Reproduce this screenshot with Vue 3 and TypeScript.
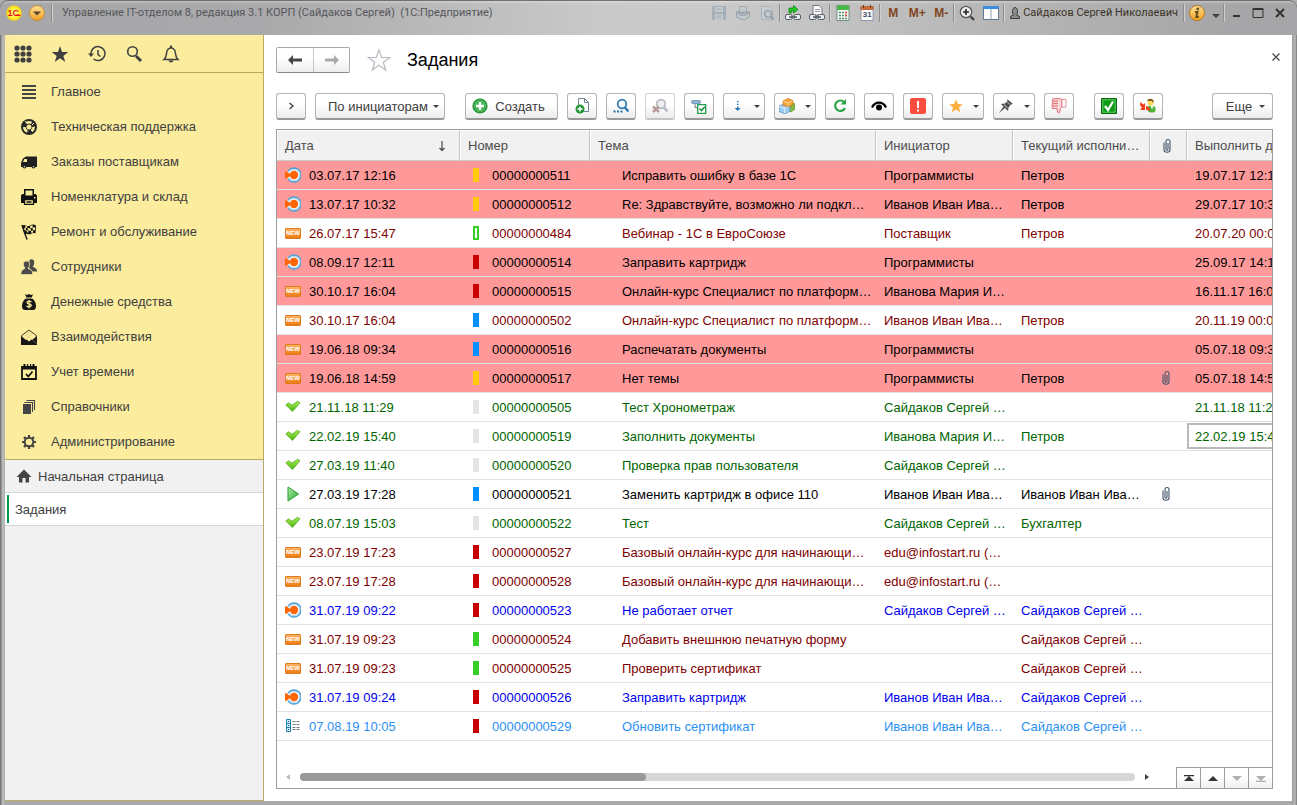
<script setup lang="ts">
interface MenuItem { icon: string; label: string }
interface Task {
  state: 'target' | 'new' | 'done' | 'play' | 'plan'
  date: string
  mark: 'yellow' | 'red' | 'blue' | 'gray' | 'green' | 'hollow'
  num: string
  topic: string
  author: string
  worker: string
  clip?: boolean
  due: string
  tone: 'black' | 'maroon' | 'green' | 'blue' | 'sky'
  overdue?: boolean
  selected?: boolean
}
interface Tool { icon: string; title: string; menu?: boolean; off?: boolean; text?: string }

const menu: MenuItem[] = [
  { icon: 'lines', label: 'Главное' },
  { icon: 'ball', label: 'Техническая поддержка' },
  { icon: 'truck', label: 'Заказы поставщикам' },
  { icon: 'printer', label: 'Номенклатура и склад' },
  { icon: 'flag', label: 'Ремонт и обслуживание' },
  { icon: 'people', label: 'Сотрудники' },
  { icon: 'money', label: 'Денежные средства' },
  { icon: 'mail', label: 'Взаимодействия' },
  { icon: 'calendar', label: 'Учет времени' },
  { icon: 'books', label: 'Справочники' },
  { icon: 'gear', label: 'Администрирование' },
]

const quick: Tool[] = [
  { icon: 'grid', title: 'Все функции' },
  { icon: 'star', title: 'Избранное' },
  { icon: 'history', title: 'История' },
  { icon: 'search', title: 'Поиск' },
  { icon: 'bell', title: 'Оповещения' },
]

const systemTools: Tool[][] = [
  [{ icon: 'floppy', title: 'Сохранить', off: true }, { icon: 'sysprint', title: 'Печать', off: true }, { icon: 'preview', title: 'Просмотр', off: true }],
  [{ icon: 'linkgo', title: 'Перейти по ссылке' }, { icon: 'linkdoc', title: 'Получить ссылку' }],
  [{ icon: 'calc', title: 'Калькулятор' }, { icon: 'cal31', title: 'Календарь', text: '31' }],
]

const tools: Tool[] = [
  { icon: 'copy', title: 'Скопировать' },
  { icon: 'find', title: 'Найти' },
  { icon: 'unfind', title: 'Отменить поиск', off: true },
  { icon: 'mode', title: 'Режим просмотра' },
  { icon: 'down', title: 'Порядок', menu: true },
  { icon: 'cubes', title: 'Создать на основании', menu: true },
  { icon: 'refresh', title: 'Обновить' },
  { icon: 'eye', title: 'Наблюдение' },
  { icon: 'alert', title: 'Важность' },
  { icon: 'goldstar', title: 'Оценка', menu: true },
  { icon: 'pin', title: 'Закрепить', menu: true },
  { icon: 'dislike', title: 'Отклонить' },
]

const actions: Tool[] = [
  { icon: 'check', title: 'Выполнить' },
  { icon: 'assign', title: 'Перенаправить' },
]

const pager: Tool[] = [
  { icon: 'first', title: 'В начало' },
  { icon: 'up', title: 'Вверх' },
  { icon: 'next', title: 'Вниз', off: true },
  { icon: 'last', title: 'В конец', off: true },
]

const tasks: Task[] = [
  { state: 'target', date: '03.07.17 12:16', mark: 'yellow', num: '00000000511', topic: 'Исправить ошибку в базе 1С', author: 'Программисты', worker: 'Петров', due: '19.07.17 12:16', tone: 'black', overdue: true },
  { state: 'target', date: '13.07.17 10:32', mark: 'yellow', num: '00000000512', topic: 'Re: Здравствуйте, возможно ли подкл…', author: 'Иванов Иван Ива…', worker: 'Петров', due: '29.07.17 10:32', tone: 'black', overdue: true },
  { state: 'new', date: '26.07.17 15:47', mark: 'hollow', num: '00000000484', topic: 'Вебинар - 1С в ЕвроСоюзе', author: 'Поставщик', worker: 'Петров', due: '20.07.20 00:00', tone: 'maroon' },
  { state: 'target', date: '08.09.17 12:11', mark: 'red', num: '00000000514', topic: 'Заправить картридж', author: 'Программисты', worker: '', due: '25.09.17 14:11', tone: 'black', overdue: true },
  { state: 'new', date: '30.10.17 16:04', mark: 'red', num: '00000000515', topic: 'Онлайн-курс Специалист по платформ…', author: 'Иванова Мария И…', worker: '', due: '16.11.17 16:04', tone: 'black', overdue: true },
  { state: 'new', date: '30.10.17 16:04', mark: 'blue', num: '00000000502', topic: 'Онлайн-курс Специалист по платформ…', author: 'Иванов Иван Ива…', worker: 'Петров', due: '20.11.19 00:00', tone: 'maroon' },
  { state: 'new', date: '19.06.18 09:34', mark: 'blue', num: '00000000516', topic: 'Распечатать документы', author: 'Программисты', worker: '', due: '05.07.18 09:34', tone: 'black', overdue: true },
  { state: 'new', date: '19.06.18 14:59', mark: 'yellow', num: '00000000517', topic: 'Нет темы', author: 'Программисты', worker: 'Петров', clip: true, due: '05.07.18 14:59', tone: 'black', overdue: true },
  { state: 'done', date: '21.11.18 11:29', mark: 'gray', num: '00000000505', topic: 'Тест Хронометраж', author: 'Сайдаков Сергей …', worker: '', due: '21.11.18 11:29', tone: 'green' },
  { state: 'done', date: '22.02.19 15:40', mark: 'gray', num: '00000000519', topic: 'Заполнить документы', author: 'Иванова Мария И…', worker: 'Петров', due: '22.02.19 15:40', tone: 'green', selected: true },
  { state: 'done', date: '27.03.19 11:40', mark: 'gray', num: '00000000520', topic: 'Проверка прав пользователя', author: 'Сайдаков Сергей …', worker: '', due: '', tone: 'green' },
  { state: 'play', date: '27.03.19 17:28', mark: 'blue', num: '00000000521', topic: 'Заменить картридж в офисе 110', author: 'Иванов Иван Ива…', worker: 'Иванов Иван Ива…', clip: true, due: '', tone: 'black' },
  { state: 'done', date: '08.07.19 15:03', mark: 'gray', num: '00000000522', topic: 'Тест', author: 'Сайдаков Сергей …', worker: 'Бухгалтер', due: '', tone: 'green' },
  { state: 'new', date: '23.07.19 17:23', mark: 'red', num: '00000000527', topic: 'Базовый онлайн-курс для начинающи…', author: 'edu@infostart.ru (…', worker: '', due: '', tone: 'maroon' },
  { state: 'new', date: '23.07.19 17:28', mark: 'red', num: '00000000528', topic: 'Базовый онлайн-курс для начинающи…', author: 'edu@infostart.ru (…', worker: '', due: '', tone: 'maroon' },
  { state: 'target', date: '31.07.19 09:22', mark: 'red', num: '00000000523', topic: 'Не работает отчет', author: 'Сайдаков Сергей …', worker: 'Сайдаков Сергей …', due: '', tone: 'blue' },
  { state: 'new', date: '31.07.19 09:23', mark: 'green', num: '00000000524', topic: 'Добавить внешнюю печатную форму', author: '', worker: 'Сайдаков Сергей …', due: '', tone: 'maroon' },
  { state: 'new', date: '31.07.19 09:23', mark: 'green', num: '00000000525', topic: 'Проверить сертификат', author: '', worker: 'Сайдаков Сергей …', due: '', tone: 'maroon' },
  { state: 'target', date: '31.07.19 09:24', mark: 'red', num: '00000000526', topic: 'Заправить картридж', author: 'Иванов Иван Ива…', worker: 'Сайдаков Сергей …', due: '', tone: 'blue' },
  { state: 'plan', date: '07.08.19 10:05', mark: 'red', num: '00000000529', topic: 'Обновить сертификат', author: 'Иванов Иван Ива…', worker: 'Сайдаков Сергей …', due: '', tone: 'sky' },
]
</script>

<template>
  <svg class="sprite" aria-hidden="true">
    <defs>
      <linearGradient id="g-green" x1="0" y1="0" x2="0" y2="1"><stop offset="0" stop-color="#a4ee4c" /><stop offset="1" stop-color="#4cb414" /></linearGradient>
      <linearGradient id="g-play" x1="0" y1="0" x2="1" y2="1"><stop offset="0" stop-color="#b8eeaa" /><stop offset="1" stop-color="#1fa32a" /></linearGradient>
      <radialGradient id="g-logo"><stop offset="0" stop-color="#fff9a0" /><stop offset="0.7" stop-color="#fff02c" /><stop offset="1" stop-color="#f2c81c" /></radialGradient>
      <linearGradient id="g-gold" x1="0" y1="0" x2="0" y2="1"><stop offset="0" stop-color="#ffe29a" /><stop offset="1" stop-color="#f0a020" /></linearGradient>
    </defs>
    <symbol id="grid" viewBox="0 0 18 18"><g fill="#404040"><circle cx="3" cy="3" r="2.6" /><circle cx="9" cy="3" r="2.6" /><circle cx="15" cy="3" r="2.6" /><circle cx="3" cy="9" r="2.6" /><circle cx="9" cy="9" r="2.6" /><circle cx="15" cy="9" r="2.6" /><circle cx="3" cy="15" r="2.6" /><circle cx="9" cy="15" r="2.6" /><circle cx="15" cy="15" r="2.6" /></g></symbol>
    <symbol id="star" viewBox="0 0 18 18"><path fill="#404040" d="M9 1l2 6h6.300l-5 3.900 2 6.200L9 13.300 3.700 17.100l2-6.200L.7 7H7z" /></symbol>
    <symbol id="history" viewBox="0 0 18 18"><path fill="none" stroke="#404040" stroke-width="1.500" d="M3 9.500A7 7 0 1 1 5.500 14M10 5v4.500l2.500 2" /><path fill="#404040" d="M0 8.500h6L3 12z" /></symbol>
    <symbol id="search" viewBox="0 0 18 18"><circle cx="7.500" cy="6.500" r="4.800" fill="none" stroke="#404040" stroke-width="1.600" /><path stroke="#404040" stroke-width="3" d="M11 11l5 5" /></symbol>
    <symbol id="bell" viewBox="0 0 18 18"><path fill="none" stroke="#404040" stroke-width="1.500" d="M2 14.500c3-2.500 2-6 3.200-9C6 3.500 7.500 3 9 2.500c1.500.5 3 1 3.800 3 1.200 3 .2 6.500 3.200 9z" /><path fill="#404040" d="M8 .5h2v3H8zM6.500 15.500h5c-.5 2.500-4.500 2.500-5 0z" /></symbol>
    <symbol id="lines" viewBox="0 0 16 16"><path stroke="#444" stroke-width="2" d="M1 2h14M1 6h14M1 10h14M1 14h14" /></symbol>
    <symbol id="ball" viewBox="0 0 16 16"><circle cx="8" cy="8" r="8" fill="#282828" /><circle cx="8" cy="8" r="4.700" fill="none" stroke="#f8eb9b" stroke-width="2.600" stroke-dasharray="5.500 4.345" stroke-dashoffset="1" /><circle cx="8" cy="8" r="2.500" fill="#f8eb9b" /><path stroke="#f8eb9b" d="M4 2l2 2M13 4l-2 2M3 12l2-2M12 13l-2-2" /></symbol>
    <symbol id="truck" viewBox="0 0 16 16"><path fill="#202020" d="M5 2.500h11V13H0V9L2 4.500z" /><path fill="#f8eb9b" d="M3.300 5H6v3H2z" /><circle cx="3.500" cy="12.500" r="2" fill="#202020" /><circle cx="12.500" cy="12.500" r="2" fill="#202020" /><circle cx="3.500" cy="12.800" r=".8" fill="#ccc" /><circle cx="12.500" cy="12.800" r=".8" fill="#ccc" /></symbol>
    <symbol id="printer" viewBox="0 0 16 16"><path fill="#111" d="M3 0h10v5h1.500L16 6.500V14H0V6.500L1.500 5H3z" /><path fill="#f8eb9b" d="M4.500 1.500h7v5h-7zM3 11h10v4H3z" /><path fill="none" stroke="#111" stroke-width="1.300" d="M3.500 10.500h9v5h-9zM5.500 13h5" /><path fill="#f8eb9b" d="M13 8h1.500v1.500H13z" /></symbol>
    <symbol id="flag" viewBox="0 0 16 16"><path stroke="#222" stroke-width="1.500" d="M1 1l5 14.500" /><path fill="#141414" d="M1 1.500c4-2 5 2 8 0 2-1.500 4-1.200 6 0l-.5 8c-4-1.800-5 2-8 .5-1.500-.5-2.500 0-3 .5z" /><path fill="#f8eb9b" d="M4 1.500l2 .5.500 2-2-.3zM9 2l2.500-1 .2 2.500L9.500 4.500zM6.500 4l3 .5L10 7 7 6.500zM11.500 3.500l2.500-.3V6l-2 .3zM3 4l1.500-.3.7 2.500-1.500.3zM5.200 6.200L7 6.500l.5 2L6 8.300zM10 7l2-.7.2 2.200-1.700.5z" /></symbol>
    <symbol id="people" viewBox="0 0 16 16"><g fill="#4b4b4b"><path d="M8.500 1c2-1.500 5-.5 4.700 2.500 0 2-.5 3-1.500 4 .5 1 4.300 1.500 4.300 4v1h-4.500L8 8.500z" /><path stroke="#f8eb9b" stroke-width=".7" d="M5.500 2c2.500 0 3.500 1.500 3 4.200-.2 1.300-.8 2-1.300 2.800.3 1.800 4.300 1.200 4.300 5 0 1-.5 1.500-1 1.500H.5C0 15.500-.2 14.500 0 14c0-3.500 3.700-3.500 4-5-.7-.8-1.300-1.600-1.500-2.800C2 3.500 3 2 5.500 2z" /></g></symbol>
    <symbol id="money" viewBox="0 0 16 16"><path fill="#181818" d="M4 0l2 1 2-1 2 1 2-.5L10.500 4c3 1.500 4.500 5 4.500 8 0 2.500-1 4-3 4H4c-2 0-3-1.500-3-4 0-3 1.500-6.500 4.500-8z" /><path stroke="#f8eb9b" d="M5 4h6" /><path fill="none" stroke="#f8eb9b" stroke-width="1.300" d="M10.500 8C8.500 6.500 6 7 6 8.500c0 2 4.300 1 4.300 3 0 1.500-2.800 1.800-4.800.5M8 6v8.500" /></symbol>
    <symbol id="mail" viewBox="0 0 16 16"><path fill="none" stroke="#3a3a2a" d="M.7 6.500L8 1l7.300 5.500v8H.7z" /><path fill="#181818" d="M0 7l5 4-5 4zM16 7l-5 4 5 4zM0 16v-1.500l5.500-4L8 12.500l2.500-2 5.500 4V16z" /><path fill="none" stroke="#c9bd7c" stroke-width=".7" d="M4 7l5-4M6 9l5-4" /></symbol>
    <symbol id="calendar" viewBox="0 0 16 16"><path fill="none" stroke="#111" stroke-width="1.800" d="M1 3h14v12H1z" /><path fill="#111" d="M1 2h14v3.500H1zM2.500 0h2v3h-2zM11.500 0h2v3h-2zM6 0h1.200v3H6zM9 0h1.200v3H9z" /><path fill="none" stroke="#111" stroke-width="1.800" d="M5 10l2.300 2.500L11.500 7.500" /></symbol>
    <symbol id="books" viewBox="0 0 16 16"><path fill="#444" d="M2 5h8v10H2z" /><path fill="none" stroke="#444" stroke-width="1.100" d="M3.500 3.500h8V13M5.500 1.500h8V11" /></symbol>
    <symbol id="gear" viewBox="0 0 16 16"><g fill="none" stroke="#444"><circle cx="8" cy="8" r="4.300" stroke-width="2" /><path stroke-width="2.200" d="M8 1v2.500M8 12.500V15M1 8h2.500M12.500 8H15M3 3l1.900 1.900M11.100 11.100L13 13M13 3l-1.900 1.900M3 13l1.900-1.900" /></g></symbol>
    <symbol id="home" viewBox="0 0 16 16"><path fill="#444" d="M8 1.500L15.500 9H13v5.500H9.500V10h-3v4.500H3V9H.5z" /></symbol>

    <symbol id="floppy" viewBox="0 0 16 16"><path fill="#8fa0ad" d="M1 1h14v14H1z" /><path fill="#c3cbd0" d="M4 2h8v5H4zM4 9h8v6H4z" /><path stroke="#8fa0ad" d="M5 4h6M5 11h6M5 13h6" /></symbol>
    <symbol id="sysprint" viewBox="0 0 16 16"><path fill="#c3cbd0" stroke="#8794a0" d="M4.500 1.500h7v5h3v6h-3v2h-7v-2h-3v-6h3zM4.500 10.500h7" /><path fill="#8794a0" d="M2 6.500h12v3H2z" /></symbol>
    <symbol id="preview" viewBox="0 0 16 16"><path fill="#cdd4d8" stroke="#98a6b0" d="M2.500 1.500h8l3 3v10h-11z" /><circle cx="9" cy="9" r="3.300" fill="#c3cdd4" stroke="#70889a" stroke-width="1.300" /><path stroke="#70889a" stroke-width="2" d="M11.500 11.500l3 3" /></symbol>
    <symbol id="linkgo" viewBox="0 0 16 16"><g fill="#eee" stroke="#555e68"><rect x=".5" y="9.500" width="6.500" height="5" rx="1.500" /><rect x="9" y="9.500" width="6.500" height="5" rx="1.500" /><path d="M4 12h8" stroke-width="1.600" /></g><path fill="#22cc22" stroke="#0d7d12" stroke-width=".8" d="M4 3h4.500V.5L13 4.500 8.500 8V5.800H6.300V8H4z" /></symbol>
    <symbol id="linkdoc" viewBox="0 0 16 16"><path fill="#fafafa" stroke="#778" d="M4 .5h6l3 3V10H4z" /><path stroke="#99a" d="M6 4.500h5M6 6.500h5" /><g fill="#eee" stroke="#555e68"><rect x=".5" y="9.500" width="6.500" height="5" rx="1.500" /><rect x="9" y="9.500" width="6.500" height="5" rx="1.500" /><path d="M4 12h8" stroke-width="1.600" /></g></symbol>
    <symbol id="calc" viewBox="0 0 16 16"><path fill="#f4f7f4" stroke="#5b7b66" stroke-width=".8" d="M2 .5h12v15H2z" /><path fill="#46b948" d="M2 .5h12V5H2z" /><path stroke="#50906a" stroke-width="1.500" stroke-dasharray="2 1" d="M4 7.500h8M4 10.500h8M4 13.500h8" /><path stroke="#d43" stroke-width="1.500" d="M10 7.500h2M10 10.500h2" /></symbol>
    <symbol id="cal31" viewBox="0 0 16 16"><path fill="#fff" stroke="#7a89a0" stroke-width=".8" d="M2 1.500h12v14H2z" /><path fill="#c56c3c" d="M1.500 1h13v4h-13z" /><path stroke="#6d3c22" d="M4.500 0v3M11.500 0v3" /></symbol>
    <symbol id="zoomin" viewBox="0 0 16 16"><circle cx="7" cy="7" r="5.700" fill="#ececec" stroke="#555" stroke-width="1.200" /><path stroke="#222" stroke-width="1.600" d="M4 7h6M7 4v6" /><path stroke="#444" stroke-width="2.400" d="M11.500 11.500L15 15" /></symbol>
    <symbol id="panels" viewBox="0 0 16 16"><path fill="#fff" stroke="#60788c" d="M.5 1.500h15v13H.5z" /><path fill="#3b8fe0" d="M0 1h16v3H0z" /><path stroke="#8ba2b4" d="M8 4v10.500" /></symbol>
    <symbol id="user" viewBox="0 0 10 12"><path fill="#8a8a8a" stroke="#3c3c3c" d="M.5 11.500V9.500L3.500 8C2 6.500 2 .5 5 .5S8 6.500 6.500 8l3 1.500v2z" /></symbol>
    <symbol id="info" viewBox="0 0 16 16"><circle cx="8" cy="8" r="7.500" fill="url(#g-gold)" stroke="#b97a1c" /><circle cx="8.800" cy="4" r="1.400" fill="#644c1c" /><path fill="none" stroke="#644c1c" stroke-width="2" d="M6 7h2.500L7.300 12h2.500" /></symbol>

    <symbol id="target" viewBox="0 0 16 16"><circle cx="9" cy="8" r="7" fill="#eaf4fb" stroke="#4a9fd4" stroke-width="1.300" /><circle cx="9" cy="8" r="5.500" fill="#fff" stroke="#7fc0e6" stroke-width=".6" /><path fill="#fff" d="M1 4.500h3v7H1z" /><circle cx="9" cy="8" r="4.200" fill="#ff6505" /><path fill="#ff6505" d="M0 4.300h1.500L6.500 8l-5 3.700H0z" /></symbol>
    <symbol id="done" viewBox="0 0 16 16"><path fill="url(#g-green)" stroke="#58a92a" stroke-width=".8" d="M.8 6L3.500 3.800 7 6.200l5.500-4L15 3.800 7.500 12.500z" /></symbol>
    <symbol id="play" viewBox="0 0 16 16"><path fill="url(#g-play)" stroke="#279a35" d="M3 1l10.500 7L3 15z" /></symbol>
    <symbol id="plan" viewBox="0 0 16 16"><path fill="#d6eefb" stroke="#1880b4" d="M1.500 1.500h4v12h-4zM1.500 5.500h4M1.500 9.500h4" /><path fill="#174f79" d="M3 3h1v1H3zM3 7h1v1H3zM3 11h1v1H3z" /><path stroke="#6e7a80" stroke-dasharray="3 1" d="M7.500 3.500H15M7.500 6.500H15M7.500 9.500H15M7.500 11.500H15" /></symbol>
    <symbol id="clip" viewBox="0 0 16 16"><path fill="none" stroke="#42546a" stroke-width="1.100" d="M5 4.500v7.500c0 3 6 3 6 0V3.500c0-2.600-4-2.600-4 0V11c0 1.500 2 1.500 2 0V5" /></symbol>

    <symbol id="plus" viewBox="0 0 16 16"><circle cx="8" cy="8" r="7" fill="#45b556" stroke="#238a35" stroke-width="1.200" /><path stroke="#fff" stroke-width="2.400" d="M8 4v8M4 8h8" /></symbol>
    <symbol id="copy" viewBox="0 0 16 16"><path fill="#fdfefe" stroke="#6c8299" d="M4.500.5h6l4 4v9h-10z" /><path fill="none" stroke="#6c8299" d="M10.500.5v4h4" /><circle cx="6" cy="11" r="4.500" fill="#249638" /><path stroke="#fff" stroke-width="1.400" d="M6 8.500v5M3.500 11h5" /></symbol>
    <symbol id="find" viewBox="0 0 16 16"><circle cx="9" cy="6" r="4.300" fill="#f4fafe" stroke="#2f7bac" stroke-width="1.700" /><path stroke="#2f7bac" stroke-width="2.500" d="M12 9.500l3.500 4" /><path stroke="#1f6fa4" stroke-width="2" stroke-dasharray="2 1.500" d="M.5 13.500h9" /></symbol>
    <symbol id="unfind" viewBox="0 0 16 16"><circle cx="9" cy="6" r="4.300" fill="#eee" stroke="#b4bac0" stroke-width="1.700" /><path stroke="#b4bac0" stroke-width="2.500" d="M12 9.500l3.500 4" /><path stroke="#b79a9a" stroke-width="2.400" d="M1 8.500l6 5.500M7 8.500L1 14" /></symbol>
    <symbol id="mode" viewBox="0 0 16 16"><rect x=".5" y="2.500" width="9" height="3" rx="1" fill="#8eb2d8" stroke="#7b9cc0" /><path fill="none" stroke="#6f7b84" d="M4 6v3.500h3" /><path fill="#fff" stroke="#269b4c" stroke-width="1.300" d="M6.700 6.700h8v8.600h-8z" /><path fill="none" stroke="#188a3c" stroke-width="1.500" d="M8.500 10.500l2 2.200 3.300-4" /></symbol>
    <symbol id="down" viewBox="0 0 16 16"><path fill="#2878b4" d="M9 3h1.500v1.200H9zM9 5.800h1.500V7H9zM9 8.500h1.500v1.500h2.200l-3 3-3-3H9z" /></symbol>
    <symbol id="cubes" viewBox="0 0 16 16"><path fill="#83ba43" stroke="#579321" stroke-width=".7" d="M10 7l4-2 2 1v5l-4 3-2-1z" /><path fill="#9dcdf3" stroke="#4b86bb" stroke-width=".7" d="M0 8l5-2 6 2v5l-5 3-6-2.500z" /><path fill="none" stroke="#e8f5ff" stroke-width=".8" d="M0 8.200l5.500 2 5-2M5.500 10.200V15" /><path fill="#f9a43c" stroke="#c87416" stroke-width=".7" d="M4 3l5-2.500L14 2.500v4L9 9 4 7z" /><path fill="none" stroke="#ffe0a0" stroke-width=".8" d="M4.300 3.200L9 5l4.800-2.300M9 5v3.500" /></symbol>
    <symbol id="refresh" viewBox="0 0 16 16"><path fill="none" stroke="#2da445" stroke-width="2.200" d="M12 4A5.200 5.200 0 1 0 13 10" /><path fill="#2da445" d="M8.500 6.500L14 1v5.500z" /></symbol>
    <symbol id="eye" viewBox="0 0 16 16"><path fill="none" stroke="#000" stroke-width="2.200" d="M1 9.500C4 3 12 3 15 9.500" /><circle cx="8" cy="9.500" r="3" /></symbol>
    <symbol id="alert" viewBox="0 0 16 16"><rect width="16" height="16" rx="2" fill="#fc4c40" /><path stroke="#fff" stroke-width="2" d="M8 3v7M8 11.500v2" /></symbol>
    <symbol id="goldstar" viewBox="0 0 16 16"><path fill="#fcae3c" d="M9 1.500l1.900 4.600 4.800.3-3.700 3.100 1.200 4.700L9 11.600l-4.200 2.600L6 9.500 2.300 6.400l4.800-.3z" /></symbol>
    <symbol id="pin" viewBox="0 0 16 16"><path fill="#4c4c4c" d="M9 1l6 5-2 .5-2.500 3L10 13l-3-3L1 15l4.500-6.500L3 6l4-.5 2.500-2.500z" /><path stroke="#999" stroke-width="1.200" d="M9 4l3 2.500M6 6.500L9.500 10" /></symbol>
    <symbol id="dislike" viewBox="0 0 16 16"><path fill="#fcdada" stroke="#dd5c62" stroke-width=".9" d="M2 .7h7.500l1.500 1V9c-1.500.5-2 2-2 4 0 2-1.500 2.700-2.500 1.300L6 10.500H2c-1.500 0-1.500-2 0-2.500-1.500 0-1.500-2 0-2.500-1.500 0-1.300-2 .2-2.300C1 3 1 1 2 .7zM2 3.200h5M2 5.600h5M2 8h5" /><path fill="#fff" stroke="#e0898d" stroke-width=".9" d="M11 1.500h4v7.500h-4z" /></symbol>
    <symbol id="check" viewBox="0 0 16 16"><path fill="#0a9a14" stroke="#07660d" d="M.5.5h15v15H.5z" /><path fill="none" stroke="#7fd684" stroke-width=".8" d="M1.800 1.800h12.400v12.400H1.800z" /><path fill="none" stroke="#fff" stroke-width="2.300" d="M4 8l3 4 5-8.500" /></symbol>
    <symbol id="assign" viewBox="0 0 16 16"><path fill="#4fb436" d="M8 8.500c2-1.500 7-1.500 7.500 2V13c-1 2-6 2-7.500 0z" /><path fill="#fff" d="M10.500 7.500l1.500 4 1.500-4z" /><circle cx="10.500" cy="4.500" r="3" fill="#ffd95a" /><path fill="#7a5a14" d="M7.200 3c.5-3 6-3 6.600.5L13 5l-1-2z" /><path fill="#f33b16" d="M.5 4l3 2.500L5 5v7H0l2-2.500-2-2zM6 7.500l3.500 2.500.5 3-4-1.500z" /></symbol>

    <symbol id="first" viewBox="0 0 16 16"><path fill="#333" d="M3 5h10v1.200H3zM8 6l5 5H3z" /></symbol>
    <symbol id="up" viewBox="0 0 16 16"><path fill="#333" d="M8 6l5 5H3z" /></symbol>
    <symbol id="next" viewBox="0 0 16 16"><path fill="#b0b0b0" d="M8 11l5-5H3z" /></symbol>
    <symbol id="last" viewBox="0 0 16 16"><path fill="#b0b0b0" d="M8 11l5-5H3zM3 10.800h10V12H3z" /></symbol>
  </svg>

  <div class="window">
    <header class="titlebar">
      <svg class="round" viewBox="0 0 16 16"><circle cx="8" cy="8" r="7.800" fill="url(#g-logo)" /><text class="logo-text" x="1.500" y="11">1С</text><path stroke="#e3161c" stroke-width="1.300" d="M9 10.400h5.500" /></svg>
      <button class="round main-menu" aria-label="Главное меню"><svg viewBox="0 0 16 16"><circle cx="8" cy="8" r="7.500" fill="url(#g-gold)" stroke="#c58b3c" /><path fill="#5c4528" d="M4 6.500h8L8 10.500z" /></svg></button>
      <i class="sep"></i>
      <span class="caption">Управление IT-отделом 8, редакция 3.1 КОРП (Сайдаков Сергей)&nbsp; (1С:Предприятие)</span>
      <div class="system">
        <template v-for="(group, g) in systemTools" :key="g">
          <button v-for="t in group" :key="t.icon" class="sys" :class="{ faded: t.off }" :aria-label="t.title"><svg><use :href="'#' + t.icon" /></svg><span v-if="t.text" class="day">{{ t.text }}</span></button>
          <i class="sep"></i>
        </template>
        <button class="sys mem">M</button>
        <button class="sys mem">M+</button>
        <button class="sys mem">M-</button>
        <i class="sep"></i>
        <button class="sys" aria-label="Масштаб"><svg><use href="#zoomin" /></svg></button>
        <button class="sys" aria-label="Панели"><svg><use href="#panels" /></svg></button>
        <i class="sep"></i>
        <button class="account"><svg><use href="#user" /></svg>Сайдаков Сергей Николаевич</button>
        <i class="sep"></i>
        <button class="sys" aria-label="Справка"><svg><use href="#info" /></svg></button>
        <button class="more-arrow" aria-label="Дополнительно"><i class="caret"></i></button>
        <i class="sep"></i>
        <button class="win" aria-label="Свернуть"><svg viewBox="0 0 12 12"><path stroke="#333" stroke-width="2" d="M3 9h7" /></svg></button>
        <button class="win" aria-label="Развернуть"><svg viewBox="0 0 12 12"><path fill="none" stroke="#333" d="M1 1.500h10v9H1zM1 2.500h10" /></svg></button>
        <button class="win" aria-label="Закрыть"><svg viewBox="0 0 12 12"><path stroke="#333" stroke-width="2" d="M2 2l8 8M10 2l-8 8" /></svg></button>
      </div>
    </header>

    <div class="body">
      <aside class="side">
        <div class="sections">
          <div class="quick">
            <button v-for="q in quick" :key="q.icon" :aria-label="q.title"><svg><use :href="'#' + q.icon" /></svg></button>
          </div>
          <nav>
            <a v-for="m in menu" :key="m.icon" href="#"><svg><use :href="'#' + m.icon" /></svg>{{ m.label }}</a>
          </nav>
        </div>
        <a class="open-page" href="#"><svg><use href="#home" /></svg>Начальная страница</a>
        <a class="open-page current" href="#">Задания</a>
      </aside>

      <main class="form">
        <div class="heading">
          <div class="history">
            <button aria-label="Назад"><svg viewBox="0 0 16 12"><path fill="#444" d="M1 6l5-5v3.500h9v3H6V11z" /></svg></button>
            <button aria-label="Вперед"><svg viewBox="0 0 16 12"><path fill="#aaa" d="M15 6l-5-5v3.500H1v3h9V11z" /></svg></button>
          </div>
          <button class="fav" aria-label="В избранное"><svg viewBox="0 0 24 24"><path fill="#fff" stroke="#b4bac0" stroke-width="1.200" d="M12 2l2.700 7.500h8l-6.400 4.800 2.400 7.700-6.700-4.700L5.300 22l2.400-7.700L1.300 9.500h8z" /></svg></button>
          <h1>Задания</h1>
          <button class="close" aria-label="Закрыть форму"><svg viewBox="0 0 10 10"><path stroke="#444" stroke-width="1.200" d="M1.500 1.500l7 7M8.500 1.500l-7 7" /></svg></button>
        </div>

        <div class="toolbar">
          <div class="group">
            <button class="tool" aria-label="Показать дерево"><svg viewBox="0 0 16 16"><path fill="none" stroke="#444" stroke-width="1.400" d="M6.500 5L10 8l-3.500 3" /></svg></button>
            <button class="tool grouping">По инициаторам<i class="caret"></i></button>
          </div>
          <div class="group">
            <button class="tool create"><svg><use href="#plus" /></svg>Создать</button>
            <button v-for="t in tools" :key="t.icon" class="tool" :class="{ split: t.menu, off: t.off }" :aria-label="t.title"><svg><use :href="'#' + t.icon" /></svg><i v-if="t.menu" class="caret"></i></button>
          </div>
          <div class="group">
            <button v-for="t in actions" :key="t.icon" class="tool" :aria-label="t.title"><svg><use :href="'#' + t.icon" /></svg></button>
          </div>
          <button class="tool more">Еще<i class="caret"></i></button>
        </div>

        <div class="list">
          <div class="rows">
            <table>
              <colgroup><col class="c-date"><col class="c-num"><col><col class="c-person"><col class="c-person"><col class="c-clip"><col class="c-due"></colgroup>
              <thead>
                <tr>
                  <th><div class="sorted">Дата<svg viewBox="0 0 8 12"><path fill="none" stroke="#444" stroke-width="1.200" d="M4 1v9M1.500 8L4 10.500 6.500 8" /></svg></div></th>
                  <th>Номер</th>
                  <th>Тема</th>
                  <th>Инициатор</th>
                  <th>Текущий исполни…</th>
                  <th class="clip" aria-label="Вложения"><svg><use href="#clip" /></svg></th>
                  <th>Выполнить до</th>
                </tr>
              </thead>
              <tbody>
                <tr v-for="t in tasks" :key="t.num" :class="[t.tone, { overdue: t.overdue }]">
                  <td><div class="cell"><span v-if="t.state === 'new'" class="badge">NEW</span><svg v-else><use :href="'#' + t.state" /></svg>{{ t.date }}</div></td>
                  <td><div class="cell number"><i class="mark" :class="'m-' + t.mark"></i>{{ t.num }}</div></td>
                  <td class="topic">{{ t.topic }}</td>
                  <td>{{ t.author }}</td>
                  <td>{{ t.worker }}</td>
                  <td class="clip"><svg v-if="t.clip"><use href="#clip" /></svg></td>
                  <td :class="{ selected: t.selected }">{{ t.due }}</td>
                </tr>
              </tbody>
            </table>
          </div>
          <div class="foot">
            <button class="scroll" aria-label="Прокрутить влево"><svg viewBox="0 0 6 8"><path fill="#bbb" d="M5 1v6L1 4z" /></svg></button>
            <div class="track"><div class="thumb"></div></div>
            <button class="scroll" aria-label="Прокрутить вправо"><svg viewBox="0 0 6 8"><path fill="#444" d="M1 1v6l4-3z" /></svg></button>
            <div class="pager">
              <button v-for="p in pager" :key="p.icon" :disabled="p.off" :aria-label="p.title"><svg><use :href="'#' + p.icon" /></svg></button>
            </div>
          </div>
        </div>
      </main>
    </div>
  </div>
</template>

<style>
body { background: #b0b0b0; }
</style>

<style scoped>
.sprite { position: absolute; width: 0; height: 0; }
.window {
  box-sizing: border-box;
  display: flex;
  flex-direction: column;
  min-height: 100vh;
  padding: 0 5px 4px;
  border-radius: 8px 8px 0 0;
  background: linear-gradient(90deg, #777 0, #777 1px, #b9b9ba 2px, #b9b9ba 4px, #a9a9a9 5px, #a9a9a9 calc(100% - 5px), #a0a0a0 calc(100% - 4px), #bcbcbc calc(100% - 2px), #777 100%);
  font-family: "Liberation Sans", Arial, sans-serif;
  font-size: 13px;
  color: #404040;
}
* { box-sizing: border-box; }
button {
  margin: 0;
  padding: 0;
  border: 0;
  background: none;
  font: inherit;
  color: inherit;
  display: flex;
  align-items: center;
  justify-content: center;
}
a { color: inherit; text-decoration: none; }
svg { width: 16px; height: 16px; flex: none; display: block; }
.caret { border: 3px solid transparent; border-top-color: #404040; border-bottom: 0; flex: none; }

.titlebar {
  display: flex;
  align-items: flex-start;
  height: 35px;
  margin: 0 -5px;
  padding: 3px 6px 0;
  border-top: 1px solid #6f6f6f;
  border-radius: 8px 8px 0 0;
  background: linear-gradient(180deg, rgba(255, 255, 255, .3) 0, rgba(255, 255, 255, 0) 3px), linear-gradient(90deg, #a7a7a9 0, #a9a9ab 20%, #c9c9c9 46%, #cacaca 55%, #a6a6a8 95%, #a6a6a8 100%);
}
.titlebar > *, .system > * { height: 18px; }
.round { width: 16px; flex: none; }
.logo-text { font-family: "Liberation Sans", Arial, sans-serif; font-size: 9px; font-weight: 700; fill: #e3161c; }
.main-menu { margin: 0 6px 0 7px; }
.sep { width: 2px; flex: none; border-left: 1px solid #8d8d8f; border-right: 1px solid #d0d0d0; }
.caption, .account { font: 11px/18px Roboto, sans-serif; white-space: nowrap; }
.caption { margin-left: 9px; color: #55565a; }
.system { display: flex; margin-left: auto; }
.sys { position: relative; width: 24px; }
.day { position: absolute; left: 0; right: 0; top: 7px; font-size: 8px; line-height: 8px; font-weight: 700; text-align: center; color: #444c5c; }
.faded { opacity: .6; }
.mem { font-weight: 700; font-size: 12px; color: #82461e; }
.account { gap: 3px; padding: 0 5px; color: #3b3426; }
.account svg { width: 10px; height: 12px; }
.more-arrow { width: 14px; }
.more-arrow .caret { border-width: 4px 4px 0; margin-top: 6px; }
.win { width: 22px; }
.win svg { width: 12px; height: 12px; }

.body { flex: 1; display: flex; background: #fff; min-width: 0; }
.side { flex: none; width: 259px; background: #f1f1f1; border-right: 1px solid #b9ac62; border-bottom: 1px solid #b9ac62; }
.sections { background: #fbec9e; border-bottom: 1px solid #b9ac62; }
.quick { display: flex; gap: 19px; height: 38px; padding-left: 9px; border-bottom: 1px solid #b9ac62; }
.quick svg { width: 18px; height: 18px; }
nav { padding-top: 1px; }
nav a { display: flex; align-items: center; gap: 14px; height: 35px; padding-left: 16px; }
.open-page { display: flex; align-items: center; gap: 6px; height: 33px; padding-left: 11px; border-bottom: 1px solid #d6d6d6; }
.current { position: relative; padding-left: 10px; background: #fff; }
.current::before { content: ""; position: absolute; left: 2px; top: 2px; bottom: 2px; width: 2px; background: #009646; }

.form { flex: 1; min-width: 0; display: flex; flex-direction: column; padding: 11px 19px 12px 12px; }
.heading { display: flex; align-items: center; height: 28px; color: #000; }
.history { display: flex; height: 26px; border: 1px solid #aaa; border-bottom-color: #888; border-radius: 2px; background: linear-gradient(#fff 40%, #ededed); }
.history button { width: 36px; }
.history button + button { border-left: 1px solid #c8c8c8; }
.history svg { height: 12px; }
.fav { margin: 0 16px 0 17px; }
.fav svg { width: 24px; height: 24px; }
h1 { margin: 0; font-size: 18px; font-weight: 400; line-height: 24px; }
.close { align-self: flex-start; width: 10px; height: 22px; margin: 0 -8px 0 auto; }
.close svg { width: 10px; height: 10px; }

.toolbar { display: flex; gap: 20px; margin-top: 19px; }
.group { display: flex; gap: 9px; }
.tool { width: 30px; height: 27px; border: 1px solid #b4b4b4; border-bottom: 2px solid #999; border-radius: 3px; background: linear-gradient(#fff 45%, #ececec); white-space: nowrap; }
.grouping { width: 130px; gap: 5px; padding-left: 7px; }
.create { width: 93px; gap: 7px; padding-right: 6px; }
.split { width: 42px; gap: 10px; }
.off { border-color: #d4d4d4; border-bottom-color: #c4c4c4; }
.more { width: 61px; gap: 7px; margin-left: auto; padding-left: 6px; }

.list { flex: 1; display: flex; flex-direction: column; margin-top: 9px; border: 1px solid #9c9c9c; min-width: 0; }
.rows { flex: 1; overflow: hidden; }
table { width: calc(100% + 25px); table-layout: fixed; border-collapse: separate; border-spacing: 0; }
.c-date { width: 183px; }
.c-num { width: 130px; }
.c-person { width: 137px; }
.c-clip { width: 37px; }
.c-due { width: 110px; }
th, td { padding: 0 8px; text-align: left; white-space: nowrap; overflow: hidden; font-weight: 400; }
th { height: 31px; border: 1px solid #fff; border-right-color: #c4c4c4; border-bottom-color: #c8c8c8; background: #f1f1f1; padding: 0 7px; color: #4c4c4c; }
.sorted { display: flex; align-items: center; justify-content: space-between; padding-right: 6px; }
.sorted svg { width: 8px; height: 12px; }
td { height: 29px; border-bottom: 1px solid #e2e2e2; }
.cell { display: flex; align-items: center; gap: 8px; }
.badge { width: 16px; height: 11px; flex: none; border: 1px solid #dd7a1c; border-radius: 1px; background: linear-gradient(#fdb366, #ee7d14); color: #fff; font-size: 6px; font-weight: 700; line-height: 9px; text-align: center; }
.number { gap: 13px; padding-left: 5px; }
td.topic { padding-left: 32px; }
.clip { padding: 0 12px 0 8px; }
.overdue td { background: #ff9999; }
.black { color: #000; }
.maroon { color: #800000; }
.green { color: #006400; }
.blue { color: #0000f0; }
.sky { color: #2a90f4; }
.mark { width: 6px; height: 14px; flex: none; }
.m-yellow { background: #ffc90e; }
.m-red { background: #c80000; }
.m-blue { background: #0090ff; }
.m-gray { background: #e4e4e4; }
.m-green { background: #35cf28; }
.m-hollow { border: 2px solid #35cf28; background: #fff; }
.selected { position: relative; }
.selected::after { content: ""; position: absolute; inset: 1px 0 1px 0; border: 2px solid #bbb; }

.foot { display: flex; align-items: flex-end; height: 21px; padding-left: 8px; }
.scroll { width: 6px; height: 22px; }
.scroll svg { width: 6px; height: 8px; }
.track { flex: 1; height: 8px; margin: 0 9px 7px; border-radius: 4px; background: #d6d6d6; }
.thumb { width: 41.4%; min-width: 40px; height: 8px; border-radius: 4px; background: #999; }
.pager { display: flex; height: 21px; margin-left: 26px; border-top: 1px solid #9c9c9c; }
.pager button { width: 24px; border-left: 1px solid #9c9c9c; background: linear-gradient(#fff 40%, #efefef); }
</style>
